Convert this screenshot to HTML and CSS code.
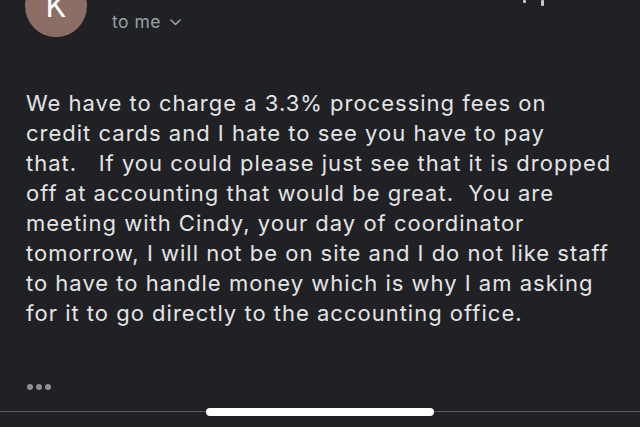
FILE: index.html
```html
<!DOCTYPE html>
<html>
<head>
<meta charset="utf-8">
<link rel="stylesheet" href="styles.css">
</head>
<body>
<div class="screen">
  <header class="head">
    <div class="avatar">K</div>
    <div class="recipient">to me
      <svg class="chev" width="11" height="7" viewBox="0 0 11 7"><path d="M1 1l4.5 4.5L10 1" fill="none" stroke="#9aa0a6" stroke-width="1.6" stroke-linecap="round" stroke-linejoin="round"/></svg>
    </div>
    <div class="actions">
      <span class="mark m1"></span>
      <span class="mark m2"></span>
    </div>
  </header>
  <p class="body-text">We have to charge a 3.3% processing fees on<br>credit cards and I hate to see you have to pay<br>that.&nbsp;&nbsp; If you could please just see that it is dropped<br>off at accounting that would be great.&nbsp; You are<br>meeting with Cindy, your day of coordinator<br>tomorrow, I will not be on site and I do not like staff<br>to have to handle money which is why I am asking<br>for it to go directly to the accounting office.</p>
  <div class="more"><span></span><span></span><span></span></div>
  <div class="home-line"></div>
  <div class="home-bar"></div>
</div>
</body>
</html>
```

FILE: styles.css
```css
html, body {
  margin: 0;
  padding: 0;
  background: #202124;
}
.screen {
  position: relative;
  width: 640px;
  height: 427px;
  overflow: hidden;
  background: #202124;
  font-family: Inter, "Liberation Sans", sans-serif;
}
.head {
  display: flex;
  align-items: flex-start;
  padding-left: 25px;
  height: 60px;
}
.avatar {
  width: 62px;
  height: 62px;
  margin-top: -25px;
  border-radius: 50%;
  background: #8b6f67;
  color: #ffffff;
  font-size: 31px;
  line-height: 62px;
  text-align: center;
  flex: none;
}
.recipient {
  margin-left: 25px;
  margin-top: 10px;
  color: #9aa0a6;
  font-size: 17.5px;
  letter-spacing: 0.5px;
  line-height: 24px;
  display: flex;
  align-items: center;
  gap: 9px;
}
.chev { margin-top: 1px; }
.actions {
  margin-left: auto;
  margin-right: 96px;
  display: flex;
  gap: 15px;
}
.mark {
  display: block;
  background: #c8c8c8;
  border-radius: 1px;
}
.m1 { width: 3px; height: 3px; }
.m2 { width: 3px; height: 6px; }
.body-text {
  margin: 28px 0 0 26px;
  color: #e4e4e4;
  font-size: 22px;
  letter-spacing: 1px;
  line-height: 30px;
  white-space: nowrap;
}
.more {
  display: flex;
  gap: 3px;
  margin: 56px 0 0 27px;
}
.more span {
  width: 6px;
  height: 6px;
  border-radius: 50%;
  background: #8e8e8e;
}
.home-line {
  position: absolute;
  left: 0;
  right: 0;
  top: 411px;
  height: 1px;
  background: #5a5a5a;
}
.home-bar {
  position: absolute;
  left: 206px;
  top: 408px;
  width: 228px;
  height: 8px;
  border-radius: 4px;
  background: #ffffff;
}
```
